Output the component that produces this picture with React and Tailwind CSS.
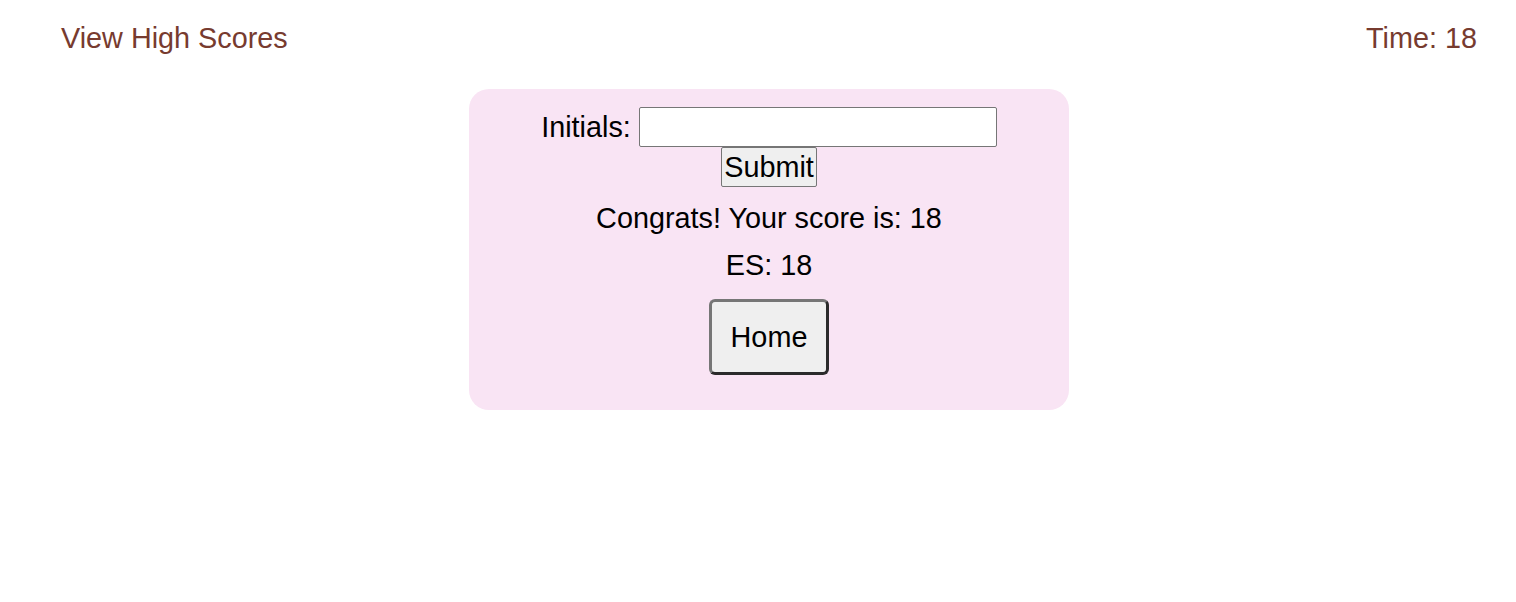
import React, { useState } from "react";

export default function App() {
  const [initials, setInitials] = useState("");
  const score = 18;

  return (
    <div className="min-h-screen bg-white text-black font-['Liberation_Sans',Arial,sans-serif]">
      {/* header */}
      <div className="flex justify-between items-center pl-[61px] pr-[39px] pt-[22px] text-[28.8px] leading-[33px] text-[#773b2f]">
        <a href="#" className="hover:underline">View High Scores</a>
        <span>Time: {score}</span>
      </div>

      {/* score card */}
      <div className="flex justify-center pl-[22px] mt-[34px]">
        <div className="w-[600px] bg-[#f9e4f4] rounded-[20px] pt-[18px] pb-[35px] flex flex-col items-center text-[28.8px] leading-[33px]">
          <div className="flex items-center h-[40px]">
            <label className="mr-[8px]">Initials:</label>
            <input
              value={initials}
              onChange={(e) => setInitials(e.target.value)}
              className="w-[358px] h-[40px] bg-white border border-[#767676] rounded-[2px] px-1 outline-none"
            />
          </div>
          <button className="h-[40px] w-[96px] bg-[#efefef] border border-[#767676] rounded-[2px] text-[28.8px] leading-[33px]">
            Submit
          </button>
          <p className="mt-[15px]">Congrats! Your score is: {score}</p>
          <p className="mt-[14px]">ES: {score}</p>
          <button className="mt-[17px] w-[120px] h-[76px] bg-[#efefef] border-[3px] border-t-[#767676] border-l-[#767676] border-r-[#2b2b2b] border-b-[#2b2b2b] rounded-[6px] text-[28.8px]">
            Home
          </button>
        </div>
      </div>
    </div>
  );
}
